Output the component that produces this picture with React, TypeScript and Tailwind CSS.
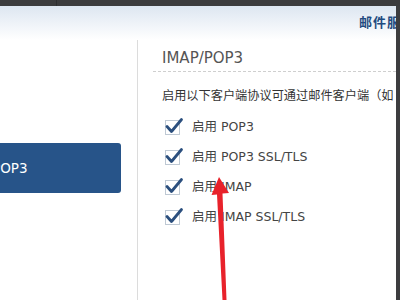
import React from 'react';

const font = { fontFamily: '"DejaVu Sans", "Noto Sans CJK SC", sans-serif' };

function CheckRow({ label }: { label: string }) {
  return (
    <div className="flex items-center h-[30px]">
      <div className="relative w-[15px] h-[15px] border border-[#bfc9d4] bg-white ml-[3px]">
        <svg className="absolute -left-[1px] -top-[4px]" width="20" height="20" viewBox="0 0 20 20">
          <path d="M2 9.5 L6.5 14.5 L16.5 2.5" fill="none" stroke="#2b4f7e" strokeWidth="2.8" strokeLinecap="round" strokeLinejoin="round" />
        </svg>
      </div>
      <span className="ml-[12px] text-[12.5px] text-[#444] whitespace-nowrap">
        启用&nbsp;{label}
      </span>
    </div>
  );
}

export default function App() {
  return (
    <div className="relative w-[400px] h-[300px] overflow-hidden bg-white flex flex-col" style={font}>
      {/* top dark strip */}
      <div className="h-[6px] shrink-0 bg-[#3b3b3d] flex">
        <div className="w-[57px] h-full border-r border-[#2e2e30]" />
      </div>

      <div className="flex flex-1 min-h-0">
        <div className="flex-1 flex flex-col min-w-0">
          {/* header */}
          <div className="h-[34px] shrink-0 bg-gradient-to-b from-[#dde6f1] to-white overflow-hidden flex items-center">
            <span className="pl-[359px] whitespace-nowrap text-[13px] font-bold text-[#1f4b80] tracking-[1px]">
              邮件服务
            </span>
          </div>

          <div className="flex flex-1 min-h-0">
            {/* sidebar */}
            <div className="w-[138px] shrink-0 border-r border-[#dcdcdc] pt-[103px]">
              <div className="w-[121px] h-[50px] bg-[#275489] rounded-r-[3px] flex items-center overflow-hidden">
                <span className="-ml-[8px] text-[13.5px] text-white whitespace-nowrap">POP3</span>
              </div>
            </div>

            {/* content */}
            <div className="flex-1 min-w-0 overflow-hidden pl-[15px]">
              <div className="pl-[9px] pt-[8px] h-[31px] text-[15px] leading-[20px] text-[#555] whitespace-nowrap">
                IMAP/POP3
              </div>
              <div className="border-t border-dashed border-[#cfcfcf]" />
              <div className="pl-[9px] pt-[15px] h-[40px] text-[12.2px] leading-[16px] text-[#333] whitespace-nowrap" style={{ fontFamily: '"Noto Sans CJK SC", sans-serif' }}>
                启用以下客户端协议可通过邮件客户端（如 Outlook）
              </div>
              <div className="pl-[9px]">
                <CheckRow label="POP3" />
                <CheckRow label="POP3 SSL/TLS" />
                <CheckRow label="IMAP" />
                <CheckRow label="IMAP SSL/TLS" />
              </div>
            </div>
          </div>
        </div>

        {/* right dark edge */}
        <div className="w-[4px] shrink-0 bg-[#3d3d3f]" />
      </div>

      {/* red annotation arrow */}
      <svg className="absolute left-0 top-0 pointer-events-none" width="400" height="300" viewBox="0 0 400 300">
        <polygon points="219,177 229,193 222.5,193.5 226.5,300 222.5,300 217,194.5 211.5,195" fill="#e8222b" />
      </svg>
    </div>
  );
}
